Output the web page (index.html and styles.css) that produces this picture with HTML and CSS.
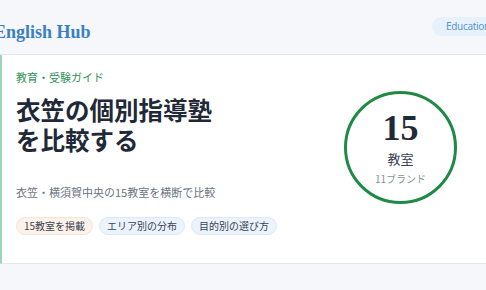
FILE: index.html
```html
<!DOCTYPE html>
<html lang="ja">
<head>
<meta charset="utf-8">
<link rel="stylesheet" href="styles.css">
</head>
<body>
<header class="site-header">
  <div class="logo">English Hub</div>
  <span class="nav-pill">Education</span>
</header>
<section class="hero">
  <div class="hero-text">
    <div class="eyebrow">教育・受験ガイド</div>
    <h1 class="title">衣笠の個別指導塾<br>を比較する</h1>
    <p class="lead">衣笠・横須賀中央の15教室を横断で比較</p>
    <div class="tags">
      <span class="tag tag-warm">15教室を掲載</span>
      <span class="tag">エリア別の分布</span>
      <span class="tag">目的別の選び方</span>
    </div>
  </div>
  <div class="stat">
    <div class="stat-num">15</div>
    <div class="stat-unit">教室</div>
    <div class="stat-sub">11ブランド</div>
  </div>
</section>
</body>
</html>
```
FILE: styles.css
```css
html, body {
  margin: 0;
  padding: 0;
}
body {
  background: #f5f7fb;
  overflow: hidden;
  font-family: "Noto Sans CJK JP", "Noto Sans", sans-serif;
  width: 486px;
}
.site-header {
  width: 520px;
  box-sizing: border-box;
  height: 55px;
  display: flex;
  align-items: center;
  justify-content: space-between;
  padding: 0 16px 0 0;
  border-bottom: 1px solid #e3e8ef;
}
.logo {
  margin-left: -6px;
  margin-top: 11px;
  font-family: "Liberation Serif", "DejaVu Serif", serif;
  font-weight: 700;
  font-size: 18px;
  color: #3a80c2;
}
.nav-pill {
  background: #e7f1fb;
  color: #5b97cf;
  font-family: "Noto Sans", sans-serif;
  font-size: 10px;
  letter-spacing: -0.3px;
  line-height: 19px;
  padding: 0 14px;
  border-radius: 10px;
  margin-top: -1px;
}
.hero {
  display: flex;
  background: #ffffff;
  border-left: 2px solid #9dd5b6;
  border-bottom: 1px solid #e3e8ef;
  height: 209px;
  box-sizing: border-box;
}
.hero-text {
  padding: 14px 0 0 14px;
}
.eyebrow {
  font-size: 11px;
  line-height: 16px;
  color: #2f9156;
}
.title {
  margin: 10px 0 0;
  font-size: 24.5px;
  line-height: 30px;
  font-weight: 700;
  color: #1f2937;
}
.lead {
  margin: 28px 0 0;
  font-size: 11px;
  line-height: 18px;
  color: #6b7482;
}
.tags {
  display: flex;
  gap: 6px;
  margin-top: 16px;
}
.tag {
  font-size: 10px;
  line-height: 16px;
  padding: 0 7px;
  border-radius: 10px;
  background: #ebf3fc;
  border: 1px solid #dde9f7;
  color: #3b4452;
}
.tag-warm {
  background: #fdf2ea;
  border-color: #f6e4d8;
}
.stat {
  margin: 36px 29px 0 auto;
  width: 113px;
  height: 113px;
  box-sizing: border-box;
  border: 3px solid #1f8a45;
  border-radius: 50%;
  display: flex;
  flex-direction: column;
  align-items: center;
  justify-content: center;
}
.stat-num {
  font-family: "Liberation Serif", "DejaVu Serif", serif;
  font-weight: 700;
  font-size: 36px;
  line-height: 38px;
  color: #1f2937;
}
.stat-unit {
  margin-top: 3px;
  font-size: 13px;
  line-height: 18px;
  color: #374151;
}
.stat-sub {
  margin-top: 4px;
  font-size: 10px;
  line-height: 14px;
  color: #8a919c;
}
```
